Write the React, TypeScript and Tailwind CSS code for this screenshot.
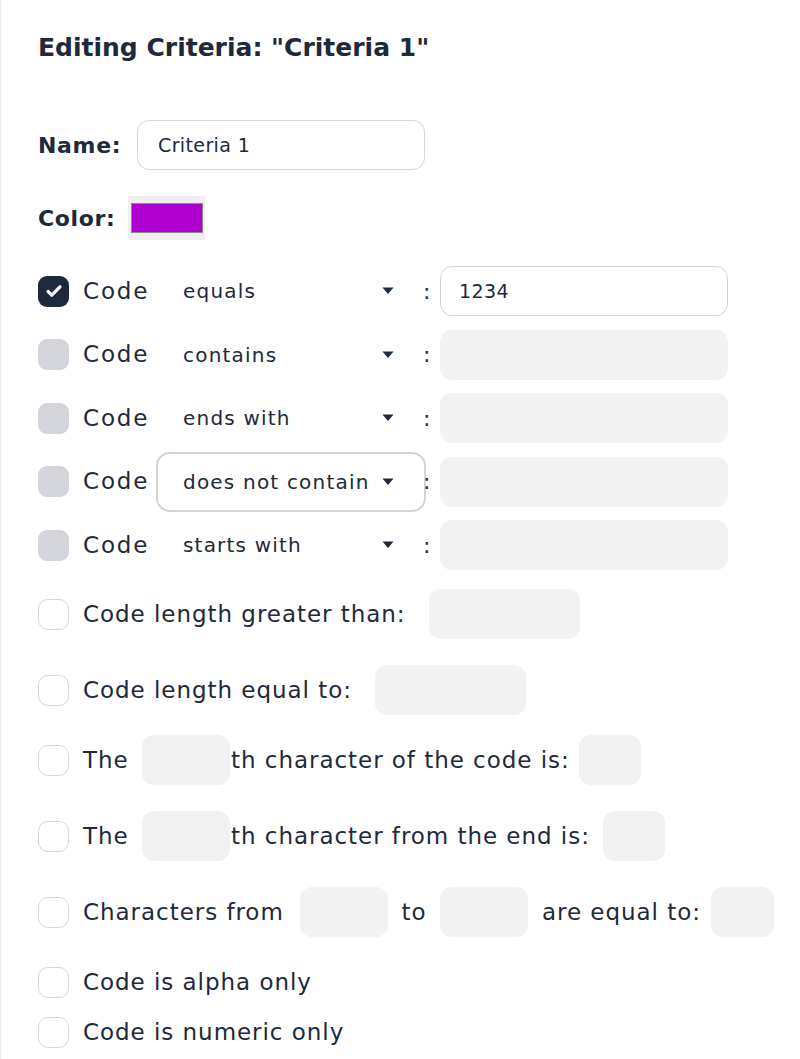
import React from "react";

const ink = "text-[#1e293b]";

function Check({ state }: { state: "on" | "disabled" | "off" }) {
  if (state === "on") {
    return (
      <span className="flex h-[31px] w-[31px] shrink-0 items-center justify-center rounded-[9px] bg-[#1e293b]">
        <svg width="22" height="22" viewBox="0 0 24 24" fill="none">
          <path d="M5.5 12.5l4 4L18.5 7.5" stroke="white" strokeWidth="3.6" strokeLinecap="round" strokeLinejoin="round" />
        </svg>
      </span>
    );
  }
  if (state === "disabled") {
    return <span className="block h-[31px] w-[31px] shrink-0 rounded-[9px] bg-[#d4d5da]" />;
  }
  return <span className="block h-[31px] w-[31px] shrink-0 rounded-[10px] border-[1.5px] border-[#d6d6d9] bg-white" />;
}

function Box({ w, children, white }: { w: string; children?: React.ReactNode; white?: boolean }) {
  return (
    <div
      className={`flex h-[50px] shrink-0 items-center rounded-[12px] px-[18px] text-[19px] tracking-[0.02em] ${w} ${
        white ? "border border-[#d4d4d4] bg-white" : "bg-[#f2f2f2]"
      }`}
    >
      {children}
    </div>
  );
}

const codeRows = [
  { op: "equals", state: "on" as const, value: "1234" },
  { op: "contains", state: "disabled" as const },
  { op: "ends with", state: "disabled" as const },
  { op: "does not contain", state: "disabled" as const, open: true },
  { op: "starts with", state: "disabled" as const },
];

export default function App() {
  return (
    <div
      className={`min-h-screen border-l border-[#ededed] bg-white pl-[37px] pt-[28px] ${ink} tracking-[0.06em]`}
      style={{ fontFamily: '"DejaVu Sans", "Liberation Sans", sans-serif' }}
    >
      <h1 className="h-[40px] text-[25px] font-bold leading-[40px] tracking-normal">Editing Criteria: "Criteria 1"</h1>

      {/* Name */}
      <div className="mt-[52px] flex h-[50px] items-center">
        <span className="w-[99px] text-[22px] font-bold tracking-[0.03em]">Name:</span>
        <div className="flex h-[50px] w-[288px] items-center rounded-[12px] border border-[#d6d6d6] px-[20px] text-[19px] tracking-[0.02em]">
          Criteria 1
        </div>
      </div>

      {/* Color */}
      <div className="mt-[26px] flex h-[44px] items-center">
        <span className="w-[90px] text-[22px] font-bold tracking-[0.03em]">Color:</span>
        <div className="flex h-[44px] w-[77px] items-center justify-center bg-[#efefef]">
          <div className="h-[30px] w-[72px] border-[1.5px] border-[#8a8a8a] bg-[#b000d0]" />
        </div>
      </div>

      {/* Code comparisons */}
      <div className="mt-[26px] flex flex-col gap-[13.5px]">
        {codeRows.map((r) => (
          <div key={r.op} className="flex h-[50px] items-center">
            <Check state={r.state} />
            <span className="ml-[14px] w-[73px] text-[23px] tracking-[0.08em]">Code</span>
            <div
              className={`flex h-[60px] w-[270px] items-center rounded-[14px] pl-[25px] pr-[30px] text-[20px] tracking-[0.06em] ${
                r.open ? "border-2 border-[#d4d4d4]" : "border-2 border-transparent"
              }`}
            >
              <span className="flex-1 whitespace-nowrap">{r.op}</span>
              <svg width="12" height="8" viewBox="0 0 12 8" className="shrink-0">
                <path d="M0.5 0.5h11L6 7z" fill="#1e293b" />
              </svg>
            </div>
            <span className="-ml-[3px] w-[17px] text-[22px]">:</span>
            <Box w="w-[288px]" white={r.state === "on"}>
              {r.value}
            </Box>
          </div>
        ))}
      </div>

      {/* Length rules */}
      <div className="mt-[19px] flex h-[50px] items-center text-[23px]">
        <Check state="off" />
        <span className="ml-[14px] w-[346px] whitespace-nowrap">Code length greater than:</span>
        <Box w="w-[151px]" />
      </div>

      <div className="mt-[26px] flex h-[50px] items-center text-[23px]">
        <Check state="off" />
        <span className="ml-[14px] w-[292px] whitespace-nowrap">Code length equal to:</span>
        <Box w="w-[151px]" />
      </div>

      <div className="mt-[20px] flex h-[50px] items-center text-[23px]">
        <Check state="off" />
        <span className="ml-[14px] w-[59px]">The</span>
        <Box w="w-[88px]" />
        <span className="ml-[1px] w-[348px] whitespace-nowrap">th character of the code is:</span>
        <Box w="w-[62px]" />
      </div>

      <div className="mt-[26px] flex h-[50px] items-center text-[23px]">
        <Check state="off" />
        <span className="ml-[14px] w-[59px]">The</span>
        <Box w="w-[88px]" />
        <span className="ml-[1px] w-[372px] whitespace-nowrap">th character from the end is:</span>
        <Box w="w-[62px]" />
      </div>

      <div className="mt-[26px] flex h-[50px] items-center text-[23px]">
        <Check state="off" />
        <span className="ml-[14px] w-[217px] whitespace-nowrap">Characters from</span>
        <Box w="w-[88px]" />
        <span className="w-[52px] text-center">to</span>
        <Box w="w-[88px]" />
        <span className="ml-[14px] w-[169px] whitespace-nowrap">are equal to:</span>
        <Box w="w-[63px]" />
      </div>

      <div className="mt-[25px] flex h-[40px] items-center text-[23px]">
        <Check state="off" />
        <span className="ml-[14px]">Code is alpha only</span>
      </div>

      <div className="mt-[10px] flex h-[40px] items-center text-[23px]">
        <Check state="off" />
        <span className="ml-[14px]">Code is numeric only</span>
      </div>
    </div>
  );
}
